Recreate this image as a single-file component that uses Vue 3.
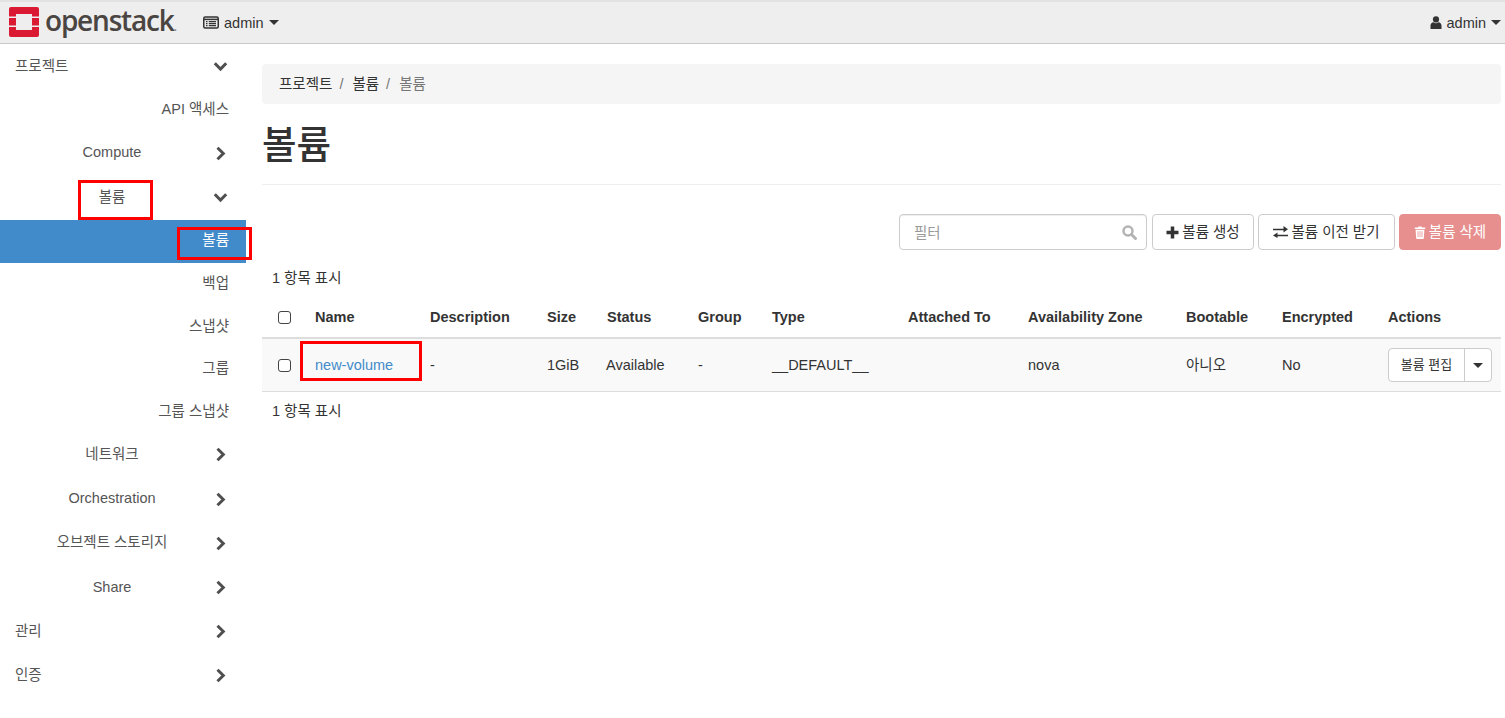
<script setup>
const sideRows = [
  { label: '프로젝트', level: 1, icon: 'down' },
  { label: 'API 액세스', level: 3 },
  { label: 'Compute', level: 2, icon: 'right' },
  { label: '볼륨', level: 2, icon: 'down' },
  { label: '볼륨', level: 3, active: true },
  { label: '백업', level: 3 },
  { label: '스냅샷', level: 3 },
  { label: '그룹', level: 3 },
  { label: '그룹 스냅샷', level: 3 },
  { label: '네트워크', level: 2, icon: 'right' },
  { label: 'Orchestration', level: 2, icon: 'right' },
  { label: '오브젝트 스토리지', level: 2, icon: 'right' },
  { label: 'Share', level: 2, icon: 'right' },
  { label: '관리', level: 1, icon: 'right' },
  { label: '인증', level: 1, icon: 'right' }
]

const columns = [
  { label: 'Name', width: 115 },
  { label: 'Description', width: 117 },
  { label: 'Size', width: 60 },
  { label: 'Status', width: 91 },
  { label: 'Group', width: 74 },
  { label: 'Type', width: 136 },
  { label: 'Attached To', width: 120 },
  { label: 'Availability Zone', width: 158 },
  { label: 'Bootable', width: 96 },
  { label: 'Encrypted', width: 106 },
  { label: 'Actions', width: 121 }
]
</script>

<template>
  <div class="page">
    <header class="navbar">
      <div class="brand">
        <svg class="logo" viewBox="0 0 30 30" width="30" height="30">
          <path fill="#da1a32" d="M2 0h26a2 2 0 0 1 2 2v7.500h-7V7H7v2.500H0V2a2 2 0 0 1 2-2zM0 11h7v7.500H0zM23 11h7v7.500h-7zM0 20h7v3h16v-3h7v8a2 2 0 0 1-2 2H2a2 2 0 0 1-2-2z" />
        </svg>
        <span class="wordmark">openstack<small>.</small></span>
      </div>
      <div class="project-menu">
        <svg width="16" height="13" viewBox="0 0 16 13">
          <rect x="0.75" y="1" width="14.500" height="11" rx="1.500" fill="none" stroke="#333" stroke-width="1.500" />
          <path d="M1 3.400h14" stroke="#333" stroke-width="1.500" />
          <path d="M3 5.600h1.500M3 7.600h1.500M3 9.600h1.500M5.800 5.600h7.200M5.800 7.600h7.200M5.800 9.600h7.200" stroke="#333" stroke-width="1.200" />
        </svg>
        <span>admin</span>
        <i class="caret"></i>
      </div>
      <div class="user-menu">
        <svg width="12" height="13" viewBox="0 0 12 13">
          <circle cx="6" cy="3.400" r="3.100" fill="#333" />
          <path d="M0.500 13V9.600C0.500 7.600 2 6.400 3.400 6.200 4.100 6.900 5 7.200 6 7.200s1.900-.3 2.600-1C10 6.400 11.500 7.600 11.500 9.600V13z" fill="#333" />
        </svg>
        <span>admin</span>
        <i class="caret"></i>
      </div>
    </header>

    <div class="body">
      <nav class="sidebar">
        <a
          v-for="(row, i) in sideRows"
          :key="i"
          class="side-row"
          :class="['level-' + row.level, { active: row.active }]"
        >
          <span class="side-label">{{ row.label }}</span>
          <svg v-if="row.icon === 'down'" class="chev" width="15" height="11" viewBox="0 0 15 11">
            <path d="M1.800 2.200L7.500 8l5.700-5.800" fill="none" stroke="#4f4f4f" stroke-width="3" />
          </svg>
          <svg v-if="row.icon === 'right'" class="chev" width="15" height="15" viewBox="0 0 15 15">
            <path d="M4.500 1.800L10.300 7.500l-5.800 5.700" fill="none" stroke="#4f4f4f" stroke-width="3" />
          </svg>
        </a>
      </nav>

      <main class="content">
        <ol class="breadcrumb">
          <li>프로젝트</li>
          <li class="sep">/</li>
          <li>볼륨</li>
          <li class="sep">/</li>
          <li class="current">볼륨</li>
        </ol>

        <h1 class="title">볼륨</h1>
        <hr class="rule" />

        <div class="actions">
          <div class="filter">
            <span class="placeholder">필터</span>
            <svg width="15" height="15" viewBox="0 0 15 15">
              <circle cx="6" cy="6" r="4.500" fill="none" stroke="#b3b3b3" stroke-width="2.500" />
              <path d="M9.500 9.500l4 4" stroke="#b3b3b3" stroke-width="3" stroke-linecap="round" />
            </svg>
          </div>
          <button class="btn create">
            <svg width="13" height="13" viewBox="0 0 13 13"><path d="M6.500 0.500v12M0.500 6.500h12" stroke="#333" stroke-width="3.500" /></svg>
            볼륨 생성
          </button>
          <button class="btn accept">
            <svg width="15" height="12" viewBox="0 0 15 12">
              <path d="M0 2.700h10.500V0L15 3.300l-4.500 3.200V4.300H0z" fill="#333" />
              <path d="M15 8.800H4.500V6.500L0 9.600 4.500 12v-1.800H15z" fill="#333" />
            </svg>
            볼륨 이전 받기
          </button>
          <button class="btn delete">
            <svg width="12" height="13" viewBox="0 0 12 13">
              <path d="M4 1.600L4.600.4h2.800L8 1.600h3.200v1.300H.8V1.600zM1.600 3.700h8.800l-.6 8.500a.8.800 0 0 1-.8.800H3a.8.800 0 0 1-.8-.8z" fill="#fff" />
              <path d="M4 5.200v6M6 5.200v6M8 5.200v6" stroke="#e78f8e" stroke-width="0.800" />
            </svg>
            볼륨 삭제
          </button>
        </div>

        <p class="count">1 항목 표시</p>

        <table class="volumes">
          <colgroup>
            <col style="width: 45px" />
            <col v-for="c in columns" :key="c.label" :style="{ width: c.width + 'px' }" />
          </colgroup>
          <thead>
            <tr>
              <th class="check"><span class="box"></span></th>
              <th v-for="c in columns" :key="c.label">{{ c.label }}</th>
            </tr>
          </thead>
          <tbody>
            <tr>
              <td class="check"><span class="box"></span></td>
              <td><a class="link">new-volume</a></td>
              <td>-</td>
              <td>1GiB</td>
              <td class="status">Available</td>
              <td>-</td>
              <td>__DEFAULT__</td>
              <td></td>
              <td>nova</td>
              <td>아니오</td>
              <td>No</td>
              <td>
                <div class="split">
                  <span class="split-main">볼륨 편집</span>
                  <span class="split-toggle"><i class="caret dark"></i></span>
                </div>
              </td>
            </tr>
          </tbody>
        </table>

        <p class="count bottom">1 항목 표시</p>
      </main>
    </div>

    <!-- 스크린샷 위에 그려진 빨간 표시 -->
    <div class="mark mark-side"></div>
    <div class="mark mark-sub"></div>
    <div class="mark mark-name"></div>
  </div>
</template>

<style scoped>
.page {
  position: relative;
  width: 1505px;
  height: 718px;
  overflow: hidden;
  background: #fff;
  color: #333;
  font-family: "Liberation Sans", "Noto Sans CJK KR", sans-serif;
  font-size: 14.5px;
  line-height: 20px;
}

.navbar {
  display: flex;
  align-items: center;
  height: 41px;
  padding-right: 4px;
  background: #eee;
  border-top: 2px solid #e2e2e2;
  border-bottom: 1px solid #c8c8c8;
}

.brand {
  display: flex;
  align-items: center;
  width: 203px;
  padding-left: 9px;
  box-sizing: border-box;
}

.logo {
  flex: none;
  margin-top: -1px;
}

.wordmark {
  margin-left: 6px;
  font-family: "Open Sans", sans-serif;
  font-size: 28px;
  font-weight: 600;
  line-height: 34px;
  letter-spacing: -1.200px;
  color: #4a4542;
}

.wordmark small {
  font-size: 13px;
  color: #8b8785;
}

.project-menu,
.user-menu {
  display: flex;
  align-items: center;
  gap: 5px;
}

.user-menu {
  margin-left: auto;
}

.caret {
  display: inline-block;
  margin-left: 0;
  border-top: 5px solid #333;
  border-left: 5px solid transparent;
  border-right: 5px solid transparent;
}

.body {
  display: flex;
}

.sidebar {
  display: flex;
  flex-direction: column;
  flex: none;
  width: 246px;
  padding-top: 0.600px;
}

.side-row {
  display: flex;
  align-items: center;
  height: 44.200px;
  padding-right: 18px;
  color: #555;
}

.side-label {
  flex: 1;
  margin-bottom: 2px;
}

.chev {
  flex: none;
}

.level-1 {
  padding-left: 15px;
}

.level-2 {
  padding-left: 11px;
}

.level-2 .side-label {
  text-align: center;
}

.level-3 {
  height: 42.500px;
  padding-right: 17px;
}

.level-3 .side-label {
  margin-bottom: 2px;
  text-align: right;
}

.level-3.active {
  height: 43.200px;
}

.active {
  background: #428bca;
  color: #fff;
}

.content {
  flex: 1;
  padding: 20px 4px 0 16px;
  min-width: 0;
}

.breadcrumb {
  display: flex;
  align-items: center;
  box-sizing: border-box;
  height: 40px;
  margin: 0;
  padding: 0 17px;
  list-style: none;
  background: #f5f5f5;
  border-radius: 4px;
}

.breadcrumb .sep {
  margin: 0 9px 0 7px;
  color: #777;
}

.breadcrumb .current {
  color: #777;
}

.title {
  margin: 21px 0 19px;
  font-size: 37.500px;
  line-height: 40px;
  font-weight: 500;
  color: #333;
}

.rule {
  margin: 0;
  border: 0;
  border-top: 1px solid #eee;
}

.actions {
  display: flex;
  justify-content: flex-end;
  gap: 4px;
  margin-top: 29px;
}

.filter {
  display: flex;
  align-items: center;
  justify-content: space-between;
  box-sizing: border-box;
  width: 248px;
  height: 36px;
  margin-right: 1px;
  padding: 0 9px 0 14px;
  border: 1px solid #ccc;
  border-radius: 4px;
  box-shadow: inset 0 1px 1px rgba(0, 0, 0, 0.075);
}

.placeholder {
  padding-top: 2px;
  color: #999;
}

.btn {
  display: flex;
  align-items: center;
  justify-content: center;
  gap: 3px;
  height: 36px;
  padding: 0 10px;
  border: 1px solid #ccc;
  border-radius: 4px;
  background: #fff;
  color: #333;
  font: inherit;
}

.create {
  width: 102px;
}

.accept {
  width: 137px;
}

.delete {
  width: 102px;
  border-color: #e78f8e;
  background: #e78f8e;
  color: #fff;
}

.count {
  margin: 18px 0 0 10px;
  line-height: 20px;
}

.count.bottom {
  margin-top: 9px;
}

.volumes {
  width: 1239px;
  margin-top: 9px;
  border-collapse: collapse;
  table-layout: fixed;
}

.volumes th,
.volumes td {
  padding: 8px;
  text-align: left;
  vertical-align: middle;
}

.volumes th {
  height: 24px;
  font-weight: 700;
  border-bottom: 2px solid #ddd;
}

.volumes td {
  height: 36px;
  background: #f9f9f9;
  border-bottom: 1px solid #ddd;
}

.volumes .check {
  padding: 0 0 0 16px;
}

.volumes .status {
  padding-left: 7px;
}

.box {
  display: block;
  box-sizing: border-box;
  width: 13px;
  height: 13px;
  background: #fff;
  border: 1.500px solid #444;
  border-radius: 3px;
}

.link {
  color: #428bca;
}

.split {
  display: flex;
  width: 104px;
  height: 34px;
  box-sizing: border-box;
  background: #fff;
  border: 1px solid #ccc;
  border-radius: 4px;
  font-size: 13px;
}

.split-main {
  display: flex;
  align-items: center;
  justify-content: center;
  flex: 1;
  border-right: 1px solid #ccc;
}

.split-toggle {
  display: flex;
  align-items: center;
  justify-content: center;
  width: 26px;
}

.mark {
  position: absolute;
  box-sizing: border-box;
  border: 3px solid #f00;
}

.mark-side {
  left: 78px;
  top: 180px;
  width: 75px;
  height: 40px;
}

.mark-sub {
  left: 177px;
  top: 227px;
  width: 75px;
  height: 33px;
}

.mark-name {
  left: 300px;
  top: 341px;
  width: 122px;
  height: 40px;
}
</style>
